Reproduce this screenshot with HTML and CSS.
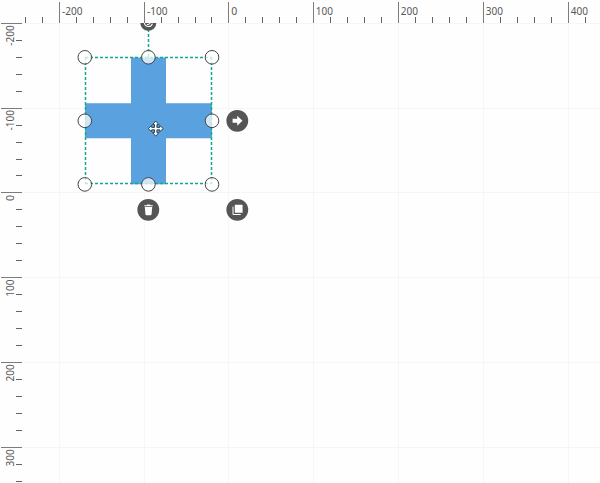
FILE: index.html
```
<!DOCTYPE html>
<html lang="en">
<head>
<meta charset="utf-8">
<title>Diagram</title>
<link rel="stylesheet" href="styles.css">
</head>
<body>
<main class="editor">
  <svg class="ruler ruler-top" viewBox="0 0 600 23">
    <path class="tick minor" d="M25.5 17v6M42.5 17v6M76.5 17v6M93.5 17v6M110.5 17v6M127.5 17v6M161.5 17v6M178.5 17v6M195.5 17v6M211.5 17v6M245.5 17v6M262.5 17v6M279.5 17v6M296.5 17v6M330.5 17v6M347.5 17v6M364.5 17v6M381.5 17v6M415.5 17v6M432.5 17v6M449.5 17v6M466.5 17v6M500.5 17v6M517.5 17v6M534.5 17v6M551.5 17v6M585.5 17v6"/>
    <path class="tick" d="M59.5 2v21M144.5 2v21M228.5 2v21M313.5 2v21M398.5 2v21M483.5 2v21M568.5 2v21"/>
    <g class="label">
      <text x="62" y="15" textLength="20.5" lengthAdjust="spacingAndGlyphs">-200</text><text x="147" y="15" textLength="20.5" lengthAdjust="spacingAndGlyphs">-100</text><text x="231.3" y="15">0</text><text x="315.8" y="15" textLength="17.2" lengthAdjust="spacingAndGlyphs">100</text><text x="400.8" y="15" textLength="17.2" lengthAdjust="spacingAndGlyphs">200</text><text x="485.8" y="15" textLength="17.2" lengthAdjust="spacingAndGlyphs">300</text><text x="570.8" y="15" textLength="17.2" lengthAdjust="spacingAndGlyphs">400</text>
    </g>
  </svg>
  <div class="workspace">
    <svg class="ruler ruler-left" viewBox="0 23 22 460">
      <path class="tick minor" d="M16 40.5h6M16 57.5h6M16 74.5h6M16 91.5h6M16 125.5h6M16 142.5h6M16 159.5h6M16 175.5h6M16 209.5h6M16 226.5h6M16 243.5h6M16 260.5h6M16 294.5h6M16 311.5h6M16 328.5h6M16 345.5h6M16 379.5h6M16 396.5h6M16 413.5h6M16 430.5h6M16 464.5h6M16 481.5h6"/>
      <path class="tick" d="M1 23.5h21M1 108.5h21M1 192.5h21M1 277.5h21M1 362.5h21M1 447.5h21"/>
      <g class="label end">
        <text transform="translate(14 25.3) rotate(-90)" textLength="20.5" lengthAdjust="spacingAndGlyphs">-200</text><text transform="translate(14 110) rotate(-90)" textLength="20.5" lengthAdjust="spacingAndGlyphs">-100</text><text transform="translate(14 195) rotate(-90)">0</text><text transform="translate(14 279.5) rotate(-90)" textLength="17.2" lengthAdjust="spacingAndGlyphs">100</text><text transform="translate(14 364.3) rotate(-90)" textLength="17.2" lengthAdjust="spacingAndGlyphs">200</text><text transform="translate(14 449.2) rotate(-90)" textLength="17.2" lengthAdjust="spacingAndGlyphs">300</text>
      </g>
    </svg>
    <svg class="canvas" viewBox="22 23 578 460">
      <path class="grid" d="M59.5 23v460M144.5 23v460M228.5 23v460M313.5 23v460M398.5 23v460M483.5 23v460M568.5 23v460M22 23.5h578M22 108.5h578M22 192.5h578M22 277.5h578M22 362.5h578M22 447.5h578"/>
      <path class="shape" d="M131 57.5h35v45.7h46v35h-46v46h-35v-46H85v-35h46z"/>
      <path class="selection" d="M148.5 29v28M85 57.5h127M85.5 57v127M211.5 57v127M85 183.5h127"/>
      <g class="handle">
        <circle cx="84.8" cy="57.3" r="6.8"/><circle cx="148.4" cy="57.3" r="6.8"/><circle cx="212" cy="57.3" r="6.8"/>
        <circle cx="84.8" cy="120.8" r="6.8"/><circle cx="212" cy="120.8" r="6.8"/>
        <circle cx="84.8" cy="184.4" r="6.8"/><circle cx="148.4" cy="184.4" r="6.8"/><circle cx="212" cy="184.4" r="6.8"/>
      </g>
      <g class="button">
        <circle cx="148.3" cy="22.8" r="8"/><circle cx="237.3" cy="120.8" r="10.9"/><circle cx="148.3" cy="209.8" r="10.9"/><circle cx="237.3" cy="209.8" r="10.9"/>
      </g>
      <path class="rotate-icon" d="M144.4 23a4.1 4.1 0 0 0 8 .6M146.8 24.3q2.2 .8 3.4-1.3"/>
      <path class="icon" d="M232.6 118.8h4.6v-3l5.3 5-5.3 5v-3h-4.6z"/>
      <path class="icon" d="M144.2 205.2h2.4l.6-.8h2.6l.6.8h2.4v1.1h-8.6zM144.8 207h7.4l-.6 7q-.1 1.2-1.2 1.2h-3.8q-1.1 0-1.2-1.2z"/>
      <rect class="icon" x="234.8" y="204.8" width="7.8" height="8" rx=".6"/>
      <path class="copy-back" d="M233 206.7v7.8h7.7"/>
      <path class="cursor" d="M155.7 121l3.1 3.6h-1.9v2.8h2.8v-1.9l3.6 3.1-3.6 3.1v-1.9h-2.8v2.8h1.9l-3.1 3.6-3.1-3.6h1.9v-2.8h-2.8v1.9l-3.6-3.1 3.6-3.1v1.9h2.8v-2.8h-1.9z"/>
    </svg>
  </div>
</main>
</body>
</html>
```
FILE: styles.css
```
body {
  margin: 0;
  overflow: hidden;
  background: #fefefe;
}

.editor {
  display: grid;
  grid-template-rows: 23px 460px;
  width: 600px;
}

.workspace {
  display: grid;
  grid-template-columns: 22px 578px;
}

svg {
  display: block;
}

.ruler-top {
  width: 600px;
  height: 23px;
}

.ruler-left {
  width: 22px;
  height: 460px;
}

.canvas {
  width: 578px;
  height: 460px;
}

.tick {
  stroke: #7c7c7c;
}

.minor {
  stroke: #646464;
}

.label {
  fill: #585858;
  font: 10.5px "Noto Sans", "Open Sans", sans-serif;
}

.end {
  text-anchor: end;
}

.grid {
  stroke: #f6f6f6;
}

.shape {
  fill: #5aa1e0;
}

.selection {
  fill: none;
  stroke: #11a98c;
  stroke-width: 1.5;
  stroke-dasharray: 3 2;
}

.handle {
  fill: #fff;
  fill-opacity: .73;
  stroke: #444;
  stroke-width: 1;
}

.button {
  fill: #555;
}

.icon {
  fill: #fff;
}

.rotate-icon {
  fill: none;
  stroke: #fff;
  stroke-width: 1.1;
}

.copy-back {
  fill: none;
  stroke: #fff;
}

.cursor {
  fill: #fff;
  stroke: #263442;
  stroke-width: .9;
}
```
